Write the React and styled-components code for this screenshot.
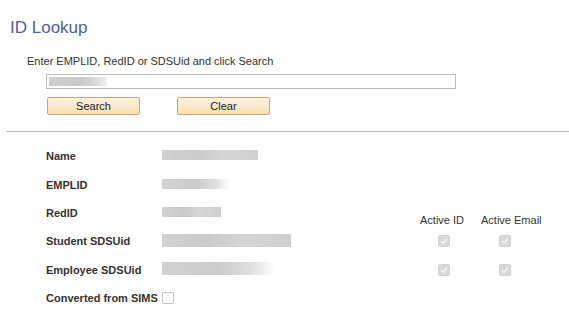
import React from 'react';
import styled, { createGlobalStyle } from 'styled-components';

const GlobalStyle = createGlobalStyle`
  body {
    margin: 0;
    background: #fff;
    font-family: "Liberation Sans", Arial, sans-serif;
    color: #333;
  }
`;

// redacted values, drawn as blurred grey bars
const rows = [
  { label: 'Name', bar: { w: 96, h: 10, fade: false } },
  { label: 'EMPLID', bar: { w: 68, h: 10, fade: true } },
  { label: 'RedID', bar: { w: 59, h: 10, fade: false }, headers: true },
  { label: 'Student SDSUid', bar: { w: 129, h: 13, fade: false }, checks: true },
  { label: 'Employee SDSUid', bar: { w: 113, h: 13, fade: true }, checks: true },
  { label: 'Converted from SIMS', converted: true },
];

function Check() {
  return (
    <CheckBox $checked>
      <svg width="8" height="8" viewBox="0 0 8 8">
        <path d="M1 4.2 L3.1 6.2 L7 1.8" fill="none" stroke="#f4f4f4" strokeWidth="1.4" />
      </svg>
    </CheckBox>
  );
}

export default function App() {
  return (
    <Page>
      <GlobalStyle />
      <Title>ID Lookup</Title>

      <SearchPanel>
        <Prompt>Enter EMPLID, RedID or SDSUid and click Search</Prompt>
        <Field>
          <FieldBlur />
        </Field>
        <ButtonRow>
          <Button>Search</Button>
          <Button>Clear</Button>
        </ButtonRow>
      </SearchPanel>

      <Divider />

      <Details>
        {rows.map(row => (
          <React.Fragment key={row.label}>
            <Label>{row.label}</Label>
            <Cell>
              {row.bar && <ValueBar $w={row.bar.w} $h={row.bar.h} $fade={row.bar.fade} />}
              {row.converted && <CheckBox />}
            </Cell>
            {row.headers ? (
              <>
                <ColHeader>Active ID</ColHeader>
                <ColHeader>Active Email</ColHeader>
              </>
            ) : row.checks ? (
              <>
                <Cell><Check /></Cell>
                <Cell><Check /></Cell>
              </>
            ) : (
              <>
                <Cell />
                <Cell />
              </>
            )}
          </React.Fragment>
        ))}
      </Details>
    </Page>
  );
}

const Page = styled.div`
  width: 569px;
  display: flex;
  flex-direction: column;
`;

const Title = styled.h1`
  margin: 18px 0 0 10px;
  font-size: 17px;
  line-height: 20px;
  font-weight: normal;
  color: #4f5f9c;
`;

const SearchPanel = styled.div`
  display: flex;
  flex-direction: column;
  padding-left: 27px;
`;

const Prompt = styled.div`
  margin-top: 17px;
  font-size: 11px;
  line-height: 13px;
  color: #333;
`;

const Field = styled.div`
  margin: 6px 0 0 19px;
  width: 406px;
  height: 13px;
  border: 1px solid #bdbdbd;
  display: flex;
  align-items: center;
  padding-left: 2px;
`;

const FieldBlur = styled.div`
  width: 58px;
  height: 9px;
  background: linear-gradient(90deg, #cfcfcf 0%, #c9c9c9 55%, #dedede 85%, #f2f2f2 100%);
  filter: blur(0.4px);
`;

const ButtonRow = styled.div`
  display: flex;
  gap: 37px;
  margin: 8px 0 0 20px;
`;

const Button = styled.button`
  width: 93px;
  height: 18px;
  padding: 0;
  border: 1px solid #d6a56b;
  border-radius: 2px;
  background: linear-gradient(#fdf3e2, #f8e0b3);
  font-family: "Liberation Sans", Arial, sans-serif;
  font-size: 11px;
  line-height: 16px;
  color: #222;
  cursor: pointer;
`;

const Divider = styled.hr`
  margin: 16px 0 0 6px;
  border: 0;
  border-top: 1px solid #b8b8b8;
  width: 563px;
`;

const Details = styled.div`
  display: grid;
  grid-template-columns: 116px 258px 61px auto;
  grid-auto-rows: 28.4px;
  padding-left: 46px;
  margin-top: 10px;
`;

const Label = styled.div`
  display: flex;
  align-items: center;
  font-size: 11px;
  font-weight: bold;
  color: #333;
  white-space: nowrap;
`;

const Cell = styled.div`
  display: flex;
  align-items: center;
`;

const ColHeader = styled.div`
  align-self: end;
  font-size: 11px;
  line-height: 13px;
  color: #333;
  white-space: nowrap;
`;

const ValueBar = styled.div`
  width: ${p => p.$w}px;
  height: ${p => p.$h}px;
  margin-top: -2px;
  background: ${p => p.$fade
    ? 'linear-gradient(90deg, #d2d2d2 0%, #cbcbcb 50%, #e0e0e0 80%, #fff 100%)'
    : 'linear-gradient(90deg, #d2d2d2 0%, #cacaca 35%, #d6d6d6 65%, #cfcfcf 100%)'};
  filter: blur(0.4px);
`;

const CheckBox = styled.span`
  box-sizing: border-box;
  width: 12px;
  height: 12px;
  margin-left: ${p => (p.$checked ? '18px' : '0')};
  border-radius: 2px;
  display: flex;
  align-items: center;
  justify-content: center;
  background: ${p => (p.$checked ? '#d9d9d9' : '#fff')};
  border: 1px solid ${p => (p.$checked ? '#d2d2d2' : '#c4c4c4')};
`;
